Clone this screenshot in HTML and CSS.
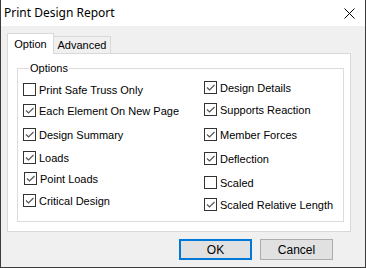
FILE: index.html
```html
<!DOCTYPE html>
<html lang="en">

<head>
  <meta charset="UTF-8">
  <title>Print Design Report</title>
  <link rel="stylesheet" href="styles.css">
</head>

<body>
  <div class="window">
    <div class="titlebar">
      <span class="title">Print Design Report</span>
      <svg class="close" width="11" height="11" viewBox="0 0 11 11">
        <path d="M0.5 0.5 L10.5 10.5 M10.5 0.5 L0.5 10.5" stroke="#000" stroke-width="1" fill="none" />
      </svg>
    </div>

    <div class="content">
      <div class="tabs">
        <div class="tab active">Option</div>
        <div class="tab">Advanced</div>
      </div>

      <div class="panel">
        <fieldset class="group">
          <legend>Options</legend>
          <div class="columns">
            <div class="col col-left">
              <label class="check"><span class="box"></span>Print Safe Truss Only</label>
              <label class="check"><span class="box on"></span>Each Element On New Page</label>
              <label class="check"><span class="box on"></span>Design Summary</label>
              <label class="check"><span class="box on"></span>Loads</label>
              <label class="check nudge"><span class="box on"></span>Point Loads</label>
              <label class="check"><span class="box on"></span>Critical Design</label>
            </div>
            <div class="col col-right">
              <label class="check"><span class="box on"></span>Design Details</label>
              <label class="check"><span class="box on"></span>Supports Reaction</label>
              <label class="check"><span class="box on"></span>Member Forces</label>
              <label class="check"><span class="box on"></span>Deflection</label>
              <label class="check"><span class="box"></span>Scaled</label>
              <label class="check"><span class="box on"></span>Scaled Relative Length</label>
            </div>
          </div>
        </fieldset>
      </div>

      <div class="footer">
        <button class="btn default">OK</button>
        <button class="btn">Cancel</button>
      </div>
    </div>
  </div>
</body>

</html>
```

FILE: styles.css
```css
body {
  margin: 0;
  padding: 0;
  font-family: "Liberation Sans", Arial, sans-serif;
  font-size: 11px;
  color: #000;
}

.window {
  width: 366px;
  height: 268px;
  box-sizing: border-box;
  border: 1px solid #3c3c3c;
  border-top: none;
  background: #f0f0f0;
  display: flex;
  flex-direction: column;
}

.titlebar {
  height: 26px;
  background: #fff;
  display: flex;
  align-items: center;
  justify-content: space-between;
  padding: 0 10px 0 3px;
}

.title {
  font-family: "Noto Sans", "Open Sans", sans-serif;
  font-size: 12px;
  margin-top: -1px;
}

.close {
  display: block;
  margin-top: 1px;
}

.content {
  flex: 1;
  padding: 7px 0 0 6px;
}

.tabs {
  display: flex;
  align-items: flex-end;
}

.tab {
  box-sizing: border-box;
  border: 1px solid #d9d9d9;
  border-bottom: none;
  height: 17px;
  width: 58px;
  margin-left: -1px;
  text-align: center;
  line-height: 15px;
  padding-top: 1px;
}

.tab.active {
  position: relative;
  z-index: 1;
  height: 21px;
  width: 47px;
  margin-left: 0;
  margin-bottom: -1px;
  background: #fff;
  line-height: 17px;
  padding-top: 2px;
}

.panel {
  width: 344px;
  height: 179px;
  box-sizing: border-box;
  border: 1px solid #d9d9d9;
  background: #fff;
  padding-top: 8px;
}

.group {
  margin: 0 6px 0 9px;
  height: 160px;
  box-sizing: border-box;
  border: 1px solid #dcdcdc;
  padding: 6px 0 0 5px;
  min-width: 0;
}

.group legend {
  padding: 0 1px;
  margin-left: 6px;
  line-height: 13px;
}

.columns {
  display: flex;
}

.col {
  display: grid;
}

.col-left {
  width: 181px;
  margin-top: 2px;
  grid-template-rows: 21px 24px 23px 21px 22px 13px;
}

.col-right {
  grid-template-rows: 22px 25px 24px 24px 22px 13px;
}

.check {
  display: flex;
  align-items: center;
  gap: 3px;
  height: 13px;
  white-space: nowrap;
}

.check.nudge {
  margin-left: 1px;
}

.box {
  width: 13px;
  height: 13px;
  box-sizing: border-box;
  border: 1px solid #333;
  background: #fff;
  flex: none;
}

.box.on {
  background: #fff url("data:image/svg+xml,%3Csvg xmlns='http://www.w3.org/2000/svg' width='11' height='11'%3E%3Cpath d='M2 5.5 L4.5 8 L9.5 3' stroke='%23555' stroke-width='1.2' fill='none'/%3E%3C/svg%3E") no-repeat center;
}

.footer {
  display: flex;
  justify-content: flex-end;
  gap: 8px;
  margin-top: 7px;
  padding-right: 32px;
}

.btn {
  width: 73px;
  height: 21px;
  box-sizing: border-box;
  border: 1px solid #adadad;
  background: #e1e1e1;
  font-family: "Liberation Sans", Arial, sans-serif;
  font-size: 12px;
  padding: 0;
  color: #000;
}

.btn.default {
  border: 2px solid #0078d7;
}
```
